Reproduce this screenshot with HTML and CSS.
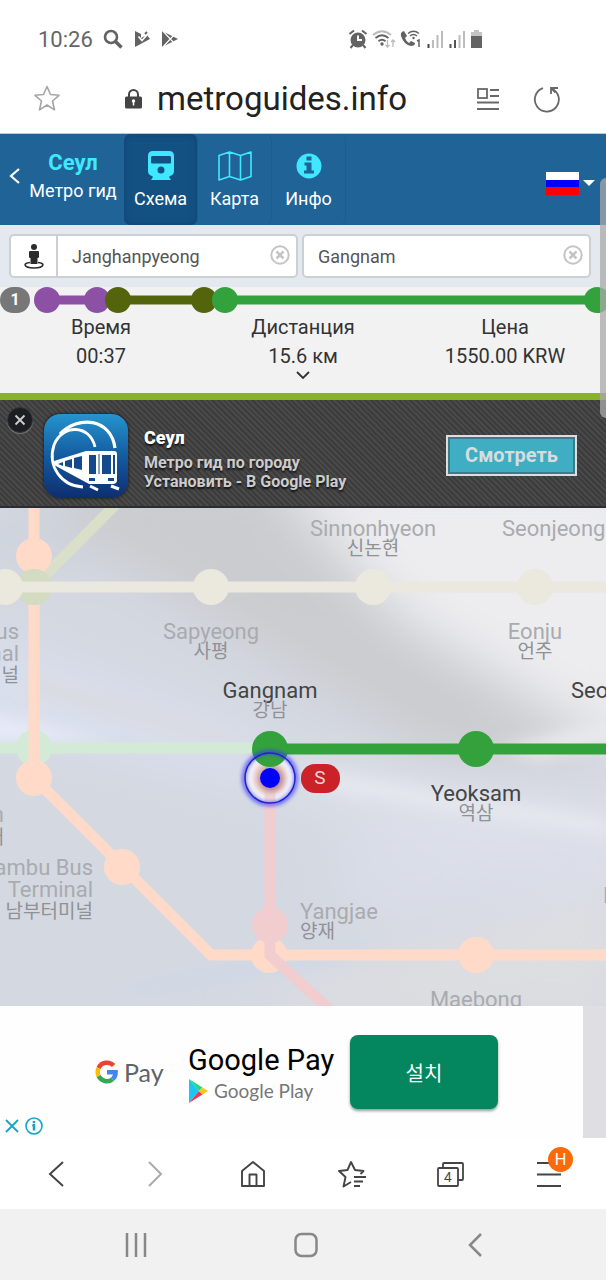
FILE: index.html
```html
<!DOCTYPE html>
<html lang="ru">
<head>
  <meta charset="UTF-8">
  <meta name="viewport" content="width=device-width, initial-scale=1">
  <title>Метро гид - Сеул</title>
  <link rel="stylesheet" href="styles.css">
</head>
<body>

  <!-- status bar -->
  <div class="status">
    <span class="clock">10:26</span>
    <svg width="20" height="20" viewBox="0 0 20 20" fill="none" stroke="#636363"><circle cx="8" cy="8" r="6" stroke-width="2.600"/><path d="M12 12l6.500 6.500" stroke-width="3.600"/></svg>
    <svg class="gap-l" width="16" height="18" viewBox="0 0 16 18"><path d="M1 1l6 3v4l6-3 3 4-15 8z" fill="#636363"/><path d="M4.500 6.500l3.500 4 7-8" stroke="#fff" stroke-width="1.800" fill="none"/><path d="M11 4l2-2" stroke="#636363" stroke-width="2"/></svg>
    <svg class="gap-l" width="17" height="18" viewBox="0 0 17 18"><path d="M1 1l16 8-16 8z" fill="#636363"/><path d="M1 0l12 13M1 18L13 5" stroke="#fff" stroke-width="1.200"/></svg>
    <span class="status-right">
      <svg width="20" height="20" viewBox="0 0 20 20"><circle cx="10" cy="11" r="7.500" fill="#636363"/><path d="M1.500 5L6 1.500M18.500 5L14 1.500M5 16l-2.500 3M15 16l2.500 3" stroke="#636363" stroke-width="2"/><path d="M10 6.500V11h4" stroke="#fff" stroke-width="2" fill="none"/></svg>
      <svg width="24" height="20" viewBox="0 0 24 20" fill="none" stroke-width="1.800"><path d="M1 6q9-7.500 18 0" stroke="#bbb"/><path d="M3.500 9q6.500-5.500 13 0M6.500 12.200q3.500-3 7 0" stroke="#636363"/><circle cx="10" cy="15" r="1.700" fill="#636363"/><path d="M15.500 11v7M13.500 16l2 2 2-2M21 18v-7M19 13l2-2 2 2" stroke="#bbb" stroke-width="1.300"/></svg>
      <svg width="22" height="20" viewBox="0 0 22 20"><path d="M4 2Q0 3 1 7q3 9 10 10 4 0 4-3l-4-2-2 2Q6 12 5 9l2-2z" fill="#636363"/><g fill="none" stroke="#636363" stroke-width="1.500"><path d="M8 4.500q5.500-4.500 11 0M10 7q3.500-3 7 0"/></g><circle cx="13.500" cy="9" r="1.200" fill="#636363"/><path d="M17 12l2-1v7" fill="none" stroke="#636363" stroke-width="1.500"/></svg>
      <svg width="18" height="20" viewBox="0 0 18 20"><path d="M2.500 15v4" stroke="#444" stroke-width="2"/><path d="M7 11v8M11.500 6v13M16 2v17" stroke="#bcbcbc" stroke-width="2"/></svg>
      <svg width="18" height="20" viewBox="0 0 18 20"><path d="M2.500 15v4M7 11v8" stroke="#555" stroke-width="2"/><path d="M11.500 6v13M16 2v17" stroke="#bcbcbc" stroke-width="2"/></svg>
      <svg width="14" height="20" viewBox="0 0 14 20"><path d="M1 7V3h3V1h5v2h3v4z" fill="#c4c4c4"/><path d="M1 7h11v12H1z" fill="#636363"/></svg>
    </span>
  </div>

  <!-- browser address bar -->
  <div class="urlbar">
    <button class="plain star" aria-label="В закладки"><svg width="26" height="27" viewBox="0 0 26 27"><path d="M13 1.500l3.500 8 8.500.8-6.500 5.700 2 8.800L13 20l-7.500 4.800 2-8.800L1 10.300l8.500-.8z" fill="none" stroke="#a5a5a5" stroke-width="1.600" stroke-linejoin="round"/></svg></button>
    <svg width="17" height="20" viewBox="0 0 17 20"><path d="M4 9V5.500a4.500 4.500 0 0 1 9 0V9" fill="none" stroke="#444" stroke-width="2"/><rect y="7.500" width="17" height="12" rx="1.500" fill="#444"/><circle cx="8.500" cy="12" r="1.700" fill="#fff"/><path d="M8.500 12v4.500" stroke="#fff" stroke-width="1.500"/></svg>
    <span class="address">metroguides.info</span>
    <button class="plain reader" aria-label="Режим чтения"><svg width="22" height="24" viewBox="0 0 22 24" fill="none" stroke="#686868" stroke-width="1.800"><rect x="1" y="2" width="9" height="9"/><path d="M13 3h9M13 9h9M0 15.500h22M0 22h22"/></svg></button>
    <button class="plain" aria-label="Обновить"><svg width="28" height="28" viewBox="0 0 28 28" fill="none" stroke="#686868" stroke-width="1.800"><path d="M18.500 3.500a12 12 0 1 1-8.500-.3"/><path d="M18 9V3h7M18 3l4.500 4.500"/></svg></button>
  </div>

  <!-- site header -->
  <header class="header">
    <a class="back" href="#" aria-label="Назад"><svg width="12" height="16" viewBox="0 0 12 16"><path d="M10 1L2 8l8 7" fill="none" stroke="#fff" stroke-width="2.200"/></svg></a>
    <a class="brand" href="#"><b>Сеул</b><span>Метро гид</span></a>
    <nav class="tabs">
      <a class="tab active" href="#">
        <svg width="26" height="30" viewBox="0 0 26 30"><path fill-rule="evenodd" fill="#3fe8ff" d="M5 0h16q5 0 5 5v15q0 4-4 5l-1 1 2 3H3l2-3-1-1q-4-1-4-5V5q0-5 5-5zM4 5q-1 0-1 1.500V11q0 1.500 1 1.500h18q1 0 1-1.500V6.500Q23 5 22 5zM13 15.500a3.500 3.500 0 1 0 0 7 3.500 3.500 0 0 0 0-7z"/></svg>
        Схема
      </a>
      <a class="tab" href="#">
        <svg width="34" height="30" viewBox="0 0 34 30" fill="none" stroke="#3fe8ff" stroke-width="1.600" stroke-linejoin="round"><path d="M1 4.500L11.500 1l11 3.500L33 1v24.500L22.500 29l-11-3.500L1 29zM11.500 1v24.500M22.500 4.500V29"/></svg>
        Карта
      </a>
      <a class="tab" href="#">
        <svg width="26" height="30" viewBox="0 0 26 30"><circle cx="13" cy="15" r="12.500" fill="#3fe8ff"/><path d="M10.500 5.500h5v4h-5zM8.500 11.500h7v8H18v3H8v-3h2.500v-5h-2z" fill="#206397"/></svg>
        Инфо
      </a>
    </nav>
    <button class="plain lang" aria-label="Язык: русский">
      <svg width="33" height="23" viewBox="0 0 33 23"><path d="M0 0h33v8H0z" fill="#fff"/><path d="M0 8h33v7H0z" fill="#00f"/><path d="M0 15h33v8H0z" fill="#f00"/></svg>
      <svg width="12" height="6" viewBox="0 0 12 6"><path d="M0 0h12L6 6z" fill="#fff"/></svg>
    </button>
  </header>

  <main>
    <form class="search">
      <div class="field">
        <button type="button" class="locate" aria-label="Рядом со мной"><svg width="20" height="25" viewBox="0 0 20 25" fill="#2b2b2b"><circle cx="10" cy="3" r="3"/><path d="M6 7h8q1 0 1 1v5q0 1-1.500 1v6h-7v-6Q5 14 5 13V8q0-1 1-1z"/><path d="M6 18.500q-5 .5-5 2.500 1 3 9 3t9-3q0-2-5-2.500" fill="none" stroke="#2b2b2b" stroke-width="1.500"/></svg></button>
        <input type="text" value="Janghanpyeong" aria-label="Откуда">
        <button type="button" class="plain clear" aria-label="Очистить откуда"><svg width="20" height="20" viewBox="0 0 20 20" fill="none" stroke="#c4c4c4"><circle cx="10" cy="10" r="8.700" stroke-width="2"/><path d="M6.500 6.500l7 7M13.500 6.500l-7 7" stroke-width="2.500"/></svg></button>
      </div>
      <div class="field">
        <input type="text" value="Gangnam" aria-label="Куда">
        <button type="button" class="plain clear" aria-label="Очистить куда"><svg width="20" height="20" viewBox="0 0 20 20" fill="none" stroke="#c4c4c4"><circle cx="10" cy="10" r="8.700" stroke-width="2"/><path d="M6.500 6.500l7 7M13.500 6.500l-7 7" stroke-width="2.500"/></svg></button>
      </div>
    </form>

    <section class="route">
      <div class="route-line">
        <span class="route-num">1</span>
        <svg viewBox="30 0 576 26">
          <g stroke-width="9">
            <path d="M47 13h50" stroke="#8c51a5"/>
            <path d="M118 13h86" stroke="#54640c"/>
            <path d="M225 13h372" stroke="#34a23c"/>
          </g>
          <circle cx="47" cy="13" r="13" fill="#8c51a5"/>
          <circle cx="97" cy="13" r="13" fill="#8c51a5"/>
          <circle cx="118" cy="13" r="13" fill="#54640c"/>
          <circle cx="204" cy="13" r="13" fill="#54640c"/>
          <circle cx="225" cy="13" r="13" fill="#34a23c"/>
          <circle cx="597" cy="13" r="13" fill="#34a23c"/>
        </svg>
      </div>
      <div class="stats">
        <div><span>Время</span><span>00:37</span></div>
        <div><span>Дистанция</span><span>15.6 км</span></div>
        <div><span>Цена</span><span>1550.00 KRW</span></div>
      </div>
      <button class="plain more" aria-label="Подробнее"><svg width="14" height="8" viewBox="0 0 14 8"><path d="M1 1l6 6 6-6" fill="none" stroke="#333" stroke-width="1.800"/></svg></button>
    </section>

    <!-- app install banner -->
    <aside class="banner">
      <button class="banner-close" aria-label="Закрыть"><svg width="12" height="12" viewBox="0 0 12 12"><path d="M1.500 1.500l9 9M10.500 1.500l-9 9" stroke="#d0d0d0" stroke-width="1.800"/></svg></button>
      <svg class="app-icon" width="84" height="84" viewBox="0 0 84 84">
        <defs><linearGradient id="app" x1="0" y1="0" x2="0" y2="1"><stop offset="0" stop-color="#2594cf"/><stop offset=".5" stop-color="#145b9f"/><stop offset="1" stop-color="#0d2e70"/></linearGradient></defs>
        <rect width="84" height="84" rx="16" fill="url(#app)"/>
        <g fill="none" stroke="#fff">
          <path d="M16 20C34 1 67 4 71 34" stroke-width="3.200"/>
          <path d="M51 33C46 10 18 10 10 31c-7 22 8 41 29 42" stroke-width="2.800"/>
        </g>
        <path fill="#fff" d="M10 47l32-10h28q3 0 3 3v26q0 4-4 4H45L10 51z"/>
        <path fill="#124a8d" d="M45 41h7v19h-7zM58 41h9v19h-9zM69 41h2v19h-2zM38 42v14l-8-2V44zM28 45v9l-7-2v-5zM19 48v4l-5-2zM45 64h6v3h-6zM64 64h6v3h-6zM54.500 40h1v20h-1z"/>
        <path d="M46 72l8 4M67 72l8 3" stroke="#fff" stroke-width="3"/>
      </svg>
      <div class="banner-text">
        <strong>Сеул</strong>
        <span>Метро гид по городу</span>
        <span>Установить - В Google Play</span>
      </div>
      <a class="banner-btn" href="#">Смотреть</a>
    </aside>

    <div class="canvas">
      <svg class="map" viewBox="0 0 606 498" role="img" aria-label="Схема метро">
        <defs>
          <filter id="soft" x="-50%" y="-50%" width="200%" height="200%"><feGaussianBlur stdDeviation="26"/></filter>
          <filter id="haze" x="-50%" y="-50%" width="200%" height="200%"><feGaussianBlur stdDeviation="8"/></filter>
          <filter id="glow" x="-50%" y="-50%" width="200%" height="200%"><feGaussianBlur stdDeviation="2"/></filter>
          <filter id="glow2" x="-50%" y="-50%" width="200%" height="200%"><feGaussianBlur stdDeviation="3"/></filter>
        </defs>

        <!-- background -->
        <rect width="606" height="498" fill="#d4d8e1"/>
        <g filter="url(#soft)">
          <path d="M60-40h250L600 200v50H440L60 20z" fill="#cacccf"/>
          <path d="M270-40h380v270H600L400 110z" fill="#ededf0"/>
          <path d="M-30 130L260 235v40L-30 200z" fill="#dbe1f1"/>
          <path d="M240 250l400 50v80L300 290z" fill="#dfe2eb"/>
          <path d="M330 330h300v60L360 410z" fill="#dadee9"/>
          <path d="M280 480l340-100v130H250z" fill="#dddee1"/>
          <path d="M-30 60L100 50 60 0h-90z" fill="#cdd3dd"/>
        </g>
        <g filter="url(#haze)">
          <path d="M30 165l210 62-20 12L20 185z" fill="#dadce2"/>
          <path d="M-20 200L120 234l-150 2z" fill="#e6e9f7"/>
          <path d="M300 262l306 50v14L330 282z" fill="#e8eaf0"/>
          <path d="M100 485l220-43 60-12-40 22-180 30z" fill="#cdd8e8"/>
          <path d="M500 240l120-30v20l-80 22z" fill="#e9eaed"/>
        </g>

        <!-- lines out of the route -->
        <g class="line">
          <path d="M118-6L34 79" stroke="#d9dfc9"/>
          <path d="M0 240h270" stroke="#d3ead6"/>
          <path d="M34 0v270l177 177h395" stroke="#ffdac8"/>
        </g>
        <circle cx="34" cy="240" r="18" fill="#d3ead6"/>
        <path class="line" d="M34 215v50" stroke="#ffdac8"/>
        <g fill="#ffdac8">
          <circle cx="34" cy="48" r="18"/>
          <circle cx="34" cy="270" r="18"/>
          <circle cx="122" cy="359" r="18"/>
          <circle cx="269" cy="447" r="18"/>
          <circle cx="476" cy="447" r="18"/>
        </g>
        <circle cx="34" cy="79" r="18" fill="#d3dbc1"/>
        <path class="line" d="M0 79h606" stroke="#ebe8e0"/>
        <g fill="#ebe8de">
          <circle cx="5" cy="79" r="18"/>
          <circle cx="211" cy="79" r="18"/>
          <circle cx="373" cy="79" r="18"/>
          <circle cx="535" cy="79" r="18"/>
        </g>
        <path class="line" d="M270 270v177l61 56" stroke="#f2cdcf"/>
        <circle cx="270" cy="417" r="18" fill="#f2cdcf"/>

        <!-- user position and route -->
        <circle cx="270" cy="270" r="25" fill="#f3f3fc"/>
        <path d="M270 270v25" class="line" stroke="#f2d5d8"/>
        <circle cx="270" cy="270" r="17" fill="#f0d0cf" filter="url(#glow)"/>
        <circle cx="271" cy="271" r="12" fill="#a87c80" filter="url(#glow2)"/>
        <path class="line" d="M270 241h336" stroke="#34a23c"/>
        <circle cx="270" cy="241" r="18" fill="#34a23c"/>
        <circle cx="476" cy="241" r="18" fill="#34a23c"/>
        <circle cx="270" cy="270" r="26" fill="none" stroke="#33f" stroke-width="3" filter="url(#glow)"/>
        <circle cx="270" cy="270" r="25" fill="none" stroke="#22c" stroke-width="1.500"/>
        <circle cx="270" cy="270" r="10" fill="#00f"/>
        <rect x="301" y="256" width="39" height="29" rx="14" fill="#cb2229"/>
        <text class="mark" x="320" y="276">S</text>

        <!-- station names -->
        <g class="name">
          <text class="mid" x="373" y="28">Sinnonhyeon</text>
          <text x="502" y="28">Seonjeongneung</text>
          <text class="mid" x="211" y="131">Sapyeong</text>
          <text class="mid" x="535" y="131">Eonju</text>
          <text class="end" x="19" y="131">Express Bus</text>
          <text class="end" x="19" y="153">Terminal</text>
          <text class="end" x="4" y="314">Education</text>
          <text class="end" x="93" y="367">Nambu Bus</text>
          <text class="end" x="93" y="389">Terminal</text>
          <text x="300" y="411">Yangjae</text>
          <text class="mid" x="476" y="499">Maebong</text>
          <text x="603" y="395">Dogok</text>
        </g>
        <g class="name on">
          <text class="mid" x="270" y="190">Gangnam</text>
          <text x="571" y="190">Seolleung</text>
          <text class="mid" x="476" y="293">Yeoksam</text>
        </g>
        <g class="kor">
          <text class="mid" x="373" y="47">신논현</text>
          <text class="mid" x="211" y="150">사평</text>
          <text class="mid" x="535" y="150">언주</text>
          <text class="end" x="19" y="174">고속터미널</text>
          <text class="mid" x="270" y="209">강남</text>
          <text class="mid" x="476" y="312">역삼</text>
          <text class="end" x="4" y="336">교대</text>
          <text class="end" x="93" y="410">남부터미널</text>
          <text x="300" y="430">양재</text>
        </g>
      </svg>

      <!-- advert -->
      <aside class="ad">
        <div class="gpay">
          <svg width="23" height="24" viewBox="0 0 23 24" fill="none" stroke-width="4.500">
            <path d="M18.600 5.500A9.200 9.200 0 0 0 3.600 8" stroke="#ea4335"/>
            <path d="M3.600 8a9.200 9.200 0 0 0 0 8" stroke="#fbbc04"/>
            <path d="M3.600 16a9.200 9.200 0 0 0 14 3.200" stroke="#34a853"/>
            <path d="M17.600 19.200a9.200 9.200 0 0 0 3-7H12" stroke="#4285f4"/>
          </svg>
          <span>Pay</span>
        </div>
        <div class="ad-text">
          <span class="ad-title">Google Pay</span>
          <span class="ad-store">
            <svg width="20" height="24" viewBox="0 0 20 24"><path d="M1 0v24l10-12z" fill="#1cc5f2"/><path d="M1 0l13.500 8.500L11 12z" fill="#1fd98a"/><path d="M1 24l13.500-8.500L11 12z" fill="#f0364f"/><path d="M14.500 8.500L20 12l-5.500 3.500L11 12z" fill="#fdc41a"/></svg>
            Google Play
          </span>
        </div>
        <button class="ad-btn">설치</button>
        <div class="ad-choices">
          <svg width="14" height="14" viewBox="0 0 14 14"><path d="M1 1l12 12M13 1L1 13" stroke="#16a5c4" stroke-width="1.800"/></svg>
          <svg width="18" height="18" viewBox="0 0 18 18"><circle cx="9" cy="9" r="8" fill="none" stroke="#16a5c4" stroke-width="1.600"/><path d="M9 4v2M7.500 8H9v5.500" stroke="#16a5c4" stroke-width="2.500"/></svg>
        </div>
      </aside>
    </div>
  </main>

  <!-- browser toolbar -->
  <nav class="toolbar">
    <button class="plain" aria-label="Назад"><svg width="28" height="28" viewBox="0 0 28 28"><path d="M20 2L7 14l13 12" fill="none" stroke="#444" stroke-width="2"/></svg></button>
    <button class="plain" aria-label="Вперед"><svg width="28" height="28" viewBox="0 0 28 28"><path d="M8 2l12 12L8 26" fill="none" stroke="#aaa" stroke-width="2"/></svg></button>
    <button class="plain" aria-label="Домой"><svg width="28" height="28" viewBox="0 0 28 28" fill="none" stroke="#444" stroke-width="1.900" stroke-linejoin="round"><path d="M2 11L13 2l11 9v15H2zM9.500 26V14.500h7V26"/></svg></button>
    <button class="plain" aria-label="Закладки"><svg width="28" height="28" viewBox="0 0 28 28" fill="none" stroke="#444" stroke-width="1.900" stroke-linejoin="round"><path d="M13 22l-7.500 4.500 2-9.500L1 11l8.500-1L13 2l4 8 8.500 1-3 3"/><path d="M16 17h12M16 21.500h9M16 26h6"/></svg></button>
    <button class="plain" aria-label="Вкладки"><svg width="28" height="28" viewBox="0 0 28 28" fill="none" stroke="#444" stroke-width="1.800"><rect x="1" y="8" width="20" height="18" rx="1"/><path d="M6 8V4q0-1 1-1h18q1 0 1 1v15q0 1-1 1h-4"/><text class="count" x="11" y="22">4</text></svg></button>
    <button class="plain menu" aria-label="Меню"><svg width="28" height="28" viewBox="0 0 28 28"><path d="M2 3h24M2 14.500h24M2 26h24" stroke="#444" stroke-width="1.800"/></svg><span class="new">H</span></button>
  </nav>

  <!-- system buttons -->
  <nav class="system">
    <button class="plain" aria-label="Последние"><svg width="24" height="26" viewBox="0 0 24 26"><path d="M3 1v24M12 1v24M21 1v24" stroke="#888" stroke-width="2.500"/></svg></button>
    <button class="plain" aria-label="Главный экран"><svg width="24" height="26" viewBox="0 0 24 26"><rect x="1.500" y="2" width="21" height="22" rx="6" fill="none" stroke="#888" stroke-width="2.500"/></svg></button>
    <button class="plain" aria-label="Назад"><svg width="24" height="26" viewBox="0 0 24 26"><path d="M18 2L7 13l11 11" fill="none" stroke="#888" stroke-width="2.500"/></svg></button>
  </nav>

  <div class="scroll"></div>

</body>
</html>
```
FILE: styles.css
```css
* {
  box-sizing: border-box;
}
body {
  margin: 0;
  position: relative;
  background: #fff;
  color: #333;
  font-family: Roboto, "Noto Sans CJK KR", sans-serif;
}
a {
  color: inherit;
  text-decoration: none;
}
svg {
  display: block;
  flex: none;
}
.plain {
  padding: 0;
  border: 0;
  background: none;
  cursor: pointer;
}

/* phone status bar */
.status {
  display: flex;
  align-items: center;
  height: 66px;
  padding: 12px 122px 0 38px;
}
.clock {
  margin-right: 10px;
  font-size: 22px;
  color: #666;
}
.gap-l {
  margin-left: 11px;
}
.status-right {
  display: flex;
  gap: 4px;
  margin-left: auto;
}

.urlbar {
  display: flex;
  align-items: center;
  height: 68px;
  padding: 0 45px 2px 34px;
  border-bottom: 1px solid #b8c8d8;
}
.star {
  margin-right: 65px;
}
.address {
  flex: 1;
  margin-left: 15px;
  font-size: 33px;
  color: #222;
}
.reader {
  margin-right: 34px;
}

/* header */
.header {
  display: flex;
  align-items: center;
  height: 91px;
  padding: 0 11px 0 9px;
  background: #206397;
  color: #fff;
}
.back {
  margin: 0 7px 8px 0;
}
.brand {
  width: 90px;
  margin: 0 6px 5px 0;
  text-align: center;
  white-space: nowrap;
  font-size: 18px;
  line-height: 28px;
}
.brand b {
  display: block;
  color: #3fe8ff;
  font-size: 22px;
}
.tabs {
  display: flex;
  align-self: stretch;
}
.tab {
  display: flex;
  flex-direction: column;
  align-items: center;
  gap: 7px;
  width: 74px;
  padding-top: 17px;
  border-right: 1px solid #1d5c8e;
  border-radius: 7px;
  font-size: 18px;
  line-height: 22px;
}
.tab.active {
  background: #145183;
  box-shadow: inset 0 0 6px #0d436f;
}
.lang {
  display: flex;
  align-items: center;
  gap: 4px;
  margin: 7px 0 0 auto;
}

/* from / to */
.search {
  display: flex;
  gap: 4px;
  padding: 9px 15px 9px 9px;
  background: #e4e9f0;
}
.field {
  display: flex;
  align-items: center;
  flex: 1;
  min-width: 0;
  height: 44px;
  padding-right: 6px;
  background: #fff;
  border: 2px solid #ccd0d4;
  border-radius: 5px;
}
.locate {
  display: flex;
  align-items: center;
  justify-content: center;
  width: 47px;
  height: 40px;
  padding: 0;
  border: 0;
  border-right: 2px solid #ccd0d4;
  background: none;
}
.field input {
  flex: 1;
  min-width: 0;
  padding: 0 0 0 14px;
  border: 0;
  outline: 0;
  background: none;
  font: 18px Roboto, sans-serif;
  color: #555;
}
.clear {
  margin-bottom: 3px;
}

/* route summary */
.route {
  background: #f2f2f2;
  border-bottom: 7px solid #88b130;
}
.route-line {
  display: flex;
}
.route-line svg {
  flex: 1;
  min-width: 0;
}
.route-num {
  width: 30px;
  border-radius: 13px;
  background: #777;
  color: #fff;
  text-align: center;
  font-size: 16px;
  font-weight: bold;
  line-height: 26px;
}
.stats {
  display: grid;
  grid-template-columns: 1fr 1fr 1fr;
  text-align: center;
  font-size: 20px;
  line-height: 29px;
}
.stats span {
  display: block;
}
.more {
  display: block;
  margin: 0 auto;
  padding-bottom: 14px;
}

/* app banner */
.banner {
  position: relative;
  display: flex;
  align-items: center;
  height: 108px;
  padding: 5px 29px 0 44px;
  border-bottom: 2px solid #2c2c32;
  background: repeating-linear-gradient(45deg, #3c3c3c 0 2px, #494949 2px 4px);
}
.banner-close {
  position: absolute;
  top: 7px;
  left: 7px;
  display: flex;
  align-items: center;
  justify-content: center;
  width: 26px;
  height: 26px;
  padding: 0;
  border: 1px solid #333;
  border-radius: 50%;
  background: #1c1e23;
  box-shadow: 0 1px 1px #777;
}
.app-icon {
  border-radius: 16px;
  box-shadow: 0 0 3px #111;
}
.banner-text {
  flex: 1;
  margin-left: 16px;
  padding-top: 6px;
  color: #ccc;
  font-size: 16px;
  font-weight: bold;
  line-height: 19px;
  text-shadow: 0 2px 2px #111;
}
.banner-text strong {
  display: block;
  margin-bottom: 3px;
  color: #fff;
  font-size: 18px;
  line-height: 24px;
}
.banner-text span {
  display: block;
}
.banner-btn {
  width: 131px;
  border: 2px solid #ddd;
  background: #3fadc2;
  box-shadow: inset 0 0 0 2px #3b7c89;
  color: #d5dddf;
  text-align: center;
  font-size: 20px;
  font-weight: bold;
  line-height: 37px;
}

/* metro map */
.canvas {
  background: #dedee3;
}
.map {
  width: 100%;
  height: auto;
}
.line {
  fill: none;
  stroke-width: 11px;
}
.name {
  font-size: 22px;
  fill: #a9abaf;
}
.on {
  fill: #444;
}
.kor {
  font-family: "Noto Sans CJK KR", sans-serif;
  font-size: 19px;
  fill: #8f9196;
}
.mid {
  text-anchor: middle;
}
.end {
  text-anchor: end;
}
.mark {
  font-size: 19px;
  fill: #f6d5d5;
  text-anchor: middle;
}

/* advert */
.ad {
  position: relative;
  display: flex;
  align-items: center;
  height: 132px;
  margin-right: 23px;
  padding-left: 95px;
  background: #fefefe;
}
.gpay {
  display: flex;
  align-items: center;
  gap: 6px;
  width: 93px;
  font-family: Lato, sans-serif;
  font-size: 25px;
  line-height: 26px;
  color: #5f6368;
}
.ad-text {
  width: 162px;
  white-space: nowrap;
}
.ad-title {
  display: block;
  font-size: 29px;
  line-height: 38px;
  color: #000;
}
.ad-store {
  display: flex;
  align-items: center;
  gap: 6px;
  font-family: Lato, sans-serif;
  font-size: 19px;
  line-height: 24px;
  color: #777;
}
.ad-btn {
  width: 148px;
  height: 74px;
  border: 0;
  border-radius: 8px;
  background: #04875f;
  box-shadow: 0 2px 3px #999;
  color: #fff;
  font: 20px "Noto Sans CJK KR", sans-serif;
}
.ad-choices {
  position: absolute;
  left: 5px;
  bottom: 3px;
  display: flex;
  align-items: center;
  gap: 6px;
}

/* browser toolbar */
.toolbar {
  display: flex;
  justify-content: space-between;
  align-items: center;
  height: 71px;
  padding: 0 43px;
  background: #fff;
}
.count {
  font-size: 14px;
  fill: #444;
  stroke: none;
  text-anchor: middle;
}
.menu {
  position: relative;
}
.new {
  position: absolute;
  top: -13px;
  left: 13px;
  width: 25px;
  border-radius: 50%;
  background: #fa6a0a;
  color: #fff;
  font-size: 16px;
  line-height: 25px;
}

.system {
  display: flex;
  justify-content: space-between;
  align-items: center;
  height: 71px;
  padding: 0 119px 0 124px;
  background: #f1f1f1;
}

.scroll {
  position: absolute;
  top: 178px;
  right: 0;
  width: 6px;
  height: 240px;
  border-radius: 6px 0 0 6px;
  background: rgba(170, 170, 170, 0.75);
}
```
